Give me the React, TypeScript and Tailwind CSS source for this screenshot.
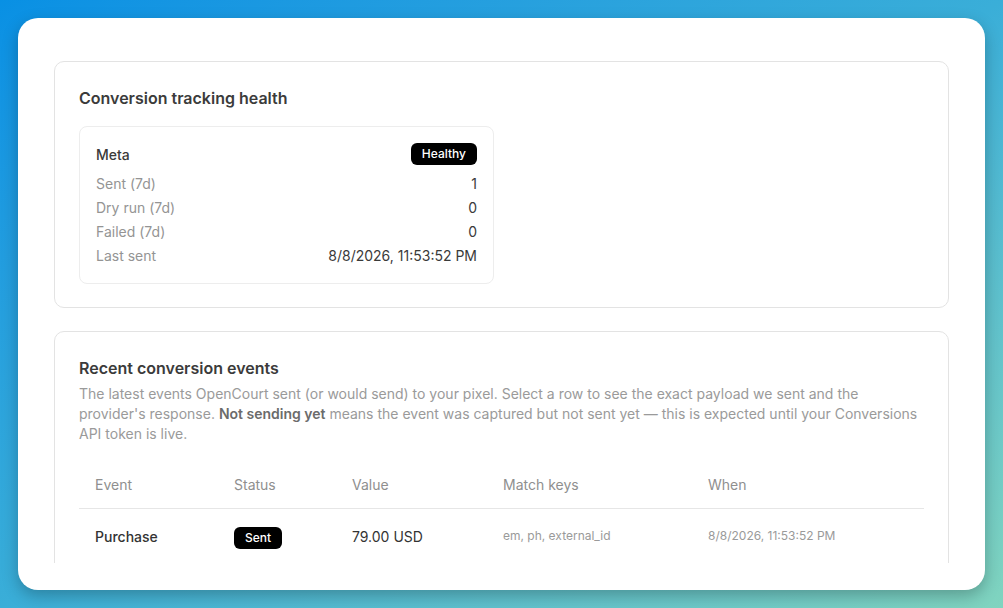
const stats = [
  { label: "Sent (7d)", value: "1" },
  { label: "Dry run (7d)", value: "0" },
  { label: "Failed (7d)", value: "0" },
  { label: "Last sent", value: "8/8/2026, 11:53:52 PM" },
];

const events = [
  {
    event: "Purchase",
    status: "Sent",
    value: "79.00 USD",
    keys: "em, ph, external_id",
    when: "8/8/2026, 11:53:52 PM",
  },
];

export default function App() {
  return (
    <div
      className="w-[1003px] h-[608px] p-[18px] bg-linear-to-br from-[#0890e4] via-[#3aaed8] to-[#80d4bf] overflow-hidden"
      style={{ fontFamily: "Inter, 'Noto Sans', sans-serif" }}
    >
      <div className="h-[572px] bg-white rounded-[20px] shadow-[0_6px_16px_rgba(0,0,0,0.25)] px-[36px] py-[27px]">
        <div className="h-full overflow-hidden pt-[16px] flex flex-col gap-[23px]">
          {/* Health */}
          <section className="border border-[#e3e3e3] rounded-[10px] px-[24px] pt-[22px] pb-[23px]">
            <h2 className="text-[16px] leading-[28px] font-semibold text-[#3b3b3b] mb-[14px]">
              Conversion tracking health
            </h2>
            <div className="w-[415px] border border-[#ededed] rounded-[8px] px-[16px] pt-[15px] pb-[16px]">
              <div className="flex items-center justify-between h-[24px] mb-[5px]">
                <span className="text-[14px] font-medium text-[#3a3a3a]">Meta</span>
                <span className="bg-black text-white text-[12px] font-medium rounded-[6px] px-[11px] h-[22px] leading-[22px]">
                  Healthy
                </span>
              </div>
              {stats.map((s) => (
                <div key={s.label} className="flex items-center justify-between h-[24px] text-[14px]">
                  <span className="text-[#949494]">{s.label}</span>
                  <span className="text-[#3a3a3a]">{s.value}</span>
                </div>
              ))}
            </div>
          </section>

          {/* Recent events */}
          <section className="border border-[#e3e3e3] rounded-[10px] px-[24px] pt-[22px] pb-[24px] shrink-0">
            <h2 className="text-[16px] leading-[28px] font-semibold text-[#3b3b3b]">
              Recent conversion events
            </h2>
            <p className="text-[14px] leading-[20px] text-[#9a9a9a] mt-[2px]">
              The latest events OpenCourt sent (or would send) to your pixel. Select a row to see the exact
              payload we sent and the provider's response. <strong className="font-semibold text-[#6b6b6b]">Not sending yet</strong> means
              the event was captured but not sent yet — this is expected until your Conversions API token is live.
            </p>
            <table className="w-full mt-[18px] text-left">
              <thead>
                <tr className="border-b border-[#e6e6e6] h-[46px] text-[14px] text-[#8f8f8f]">
                  <th className="font-normal pl-[16px] w-[139px]">Event</th>
                  <th className="font-normal pl-[16px] w-[118px]">Status</th>
                  <th className="font-normal pl-[16px] w-[151px]">Value</th>
                  <th className="font-normal pl-[16px] w-[205px]">Match keys</th>
                  <th className="font-normal pl-[16px]">When</th>
                </tr>
              </thead>
              <tbody>
                {events.map((e) => (
                  <tr key={e.event} className="h-[56px]">
                    <td className="pl-[16px] text-[14px] font-medium text-[#333]">{e.event}</td>
                    <td className="pl-[16px]">
                      <span className="inline-block bg-black text-white text-[12px] font-medium rounded-[6px] px-[11px] h-[22px] leading-[22px]">
                        {e.status}
                      </span>
                    </td>
                    <td className="pl-[16px] text-[14px] text-[#333]">{e.value}</td>
                    <td className="pl-[16px] text-[12px] text-[#9a9a9a]">{e.keys}</td>
                    <td className="pl-[16px] text-[12px] text-[#9a9a9a]">{e.when}</td>
                  </tr>
                ))}
              </tbody>
            </table>
          </section>
        </div>
      </div>
    </div>
  );
}
